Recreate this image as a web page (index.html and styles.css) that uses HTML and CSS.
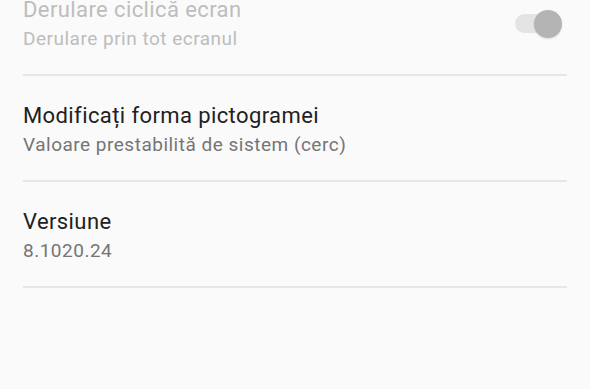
FILE: index.html
```html
<!DOCTYPE html>
<html lang="ro">
<head>
<meta charset="utf-8">
<title>Setări</title>
<link rel="stylesheet" href="styles.css">
</head>
<body>
<div class="list">
  <div class="item disabled">
    <div class="text">
      <div class="title">Derulare ciclică ecran</div>
      <div class="summary">Derulare prin tot ecranul</div>
    </div>
    <div class="switch">
      <div class="track"></div>
      <div class="thumb"></div>
    </div>
  </div>
  <div class="item">
    <div class="text">
      <div class="title">Modificați forma pictogramei</div>
      <div class="summary">Valoare prestabilită de sistem (cerc)</div>
    </div>
  </div>
  <div class="item">
    <div class="text">
      <div class="title">Versiune</div>
      <div class="summary">8.1020.24</div>
    </div>
  </div>
</div>
</body>
</html>
```
FILE: styles.css
```css
html, body {
  margin: 0;
  padding: 0;
  background: #fafafa;
  height: 100%;
  overflow: hidden;
}
body {
  font-family: Roboto, "Noto Sans", sans-serif;
}
.list {
  margin-top: -30px;
  display: flex;
  flex-direction: column;
}
.item {
  margin: 0 23px;
  padding: 27px 0 24px;
  border-bottom: 2px solid #e6e6e6;
  display: flex;
  align-items: center;
}
.text {
  flex: 1;
  display: flex;
  flex-direction: column;
  gap: 5px;
}
.title {
  font-size: 22px;
  line-height: 26px;
  letter-spacing: 0.4px;
  color: #212121;
}
.summary {
  font-size: 19px;
  line-height: 22px;
  letter-spacing: 0.5px;
  color: #757575;
}
.disabled .title,
.disabled .summary {
  color: #bdbdbd;
}
.switch {
  position: relative;
  width: 48px;
  height: 30px;
  margin-right: 5px;
  display: flex;
  align-items: center;
}
.track {
  width: 44px;
  height: 19px;
  margin-left: 1px;
  border-radius: 10px;
  background: #e4e4e4;
}
.thumb {
  position: absolute;
  right: 0;
  top: 1px;
  width: 28px;
  height: 28px;
  border-radius: 50%;
  background: #b4b4b4;
  box-shadow: 0 1px 2px rgba(0,0,0,0.12);
}
```
